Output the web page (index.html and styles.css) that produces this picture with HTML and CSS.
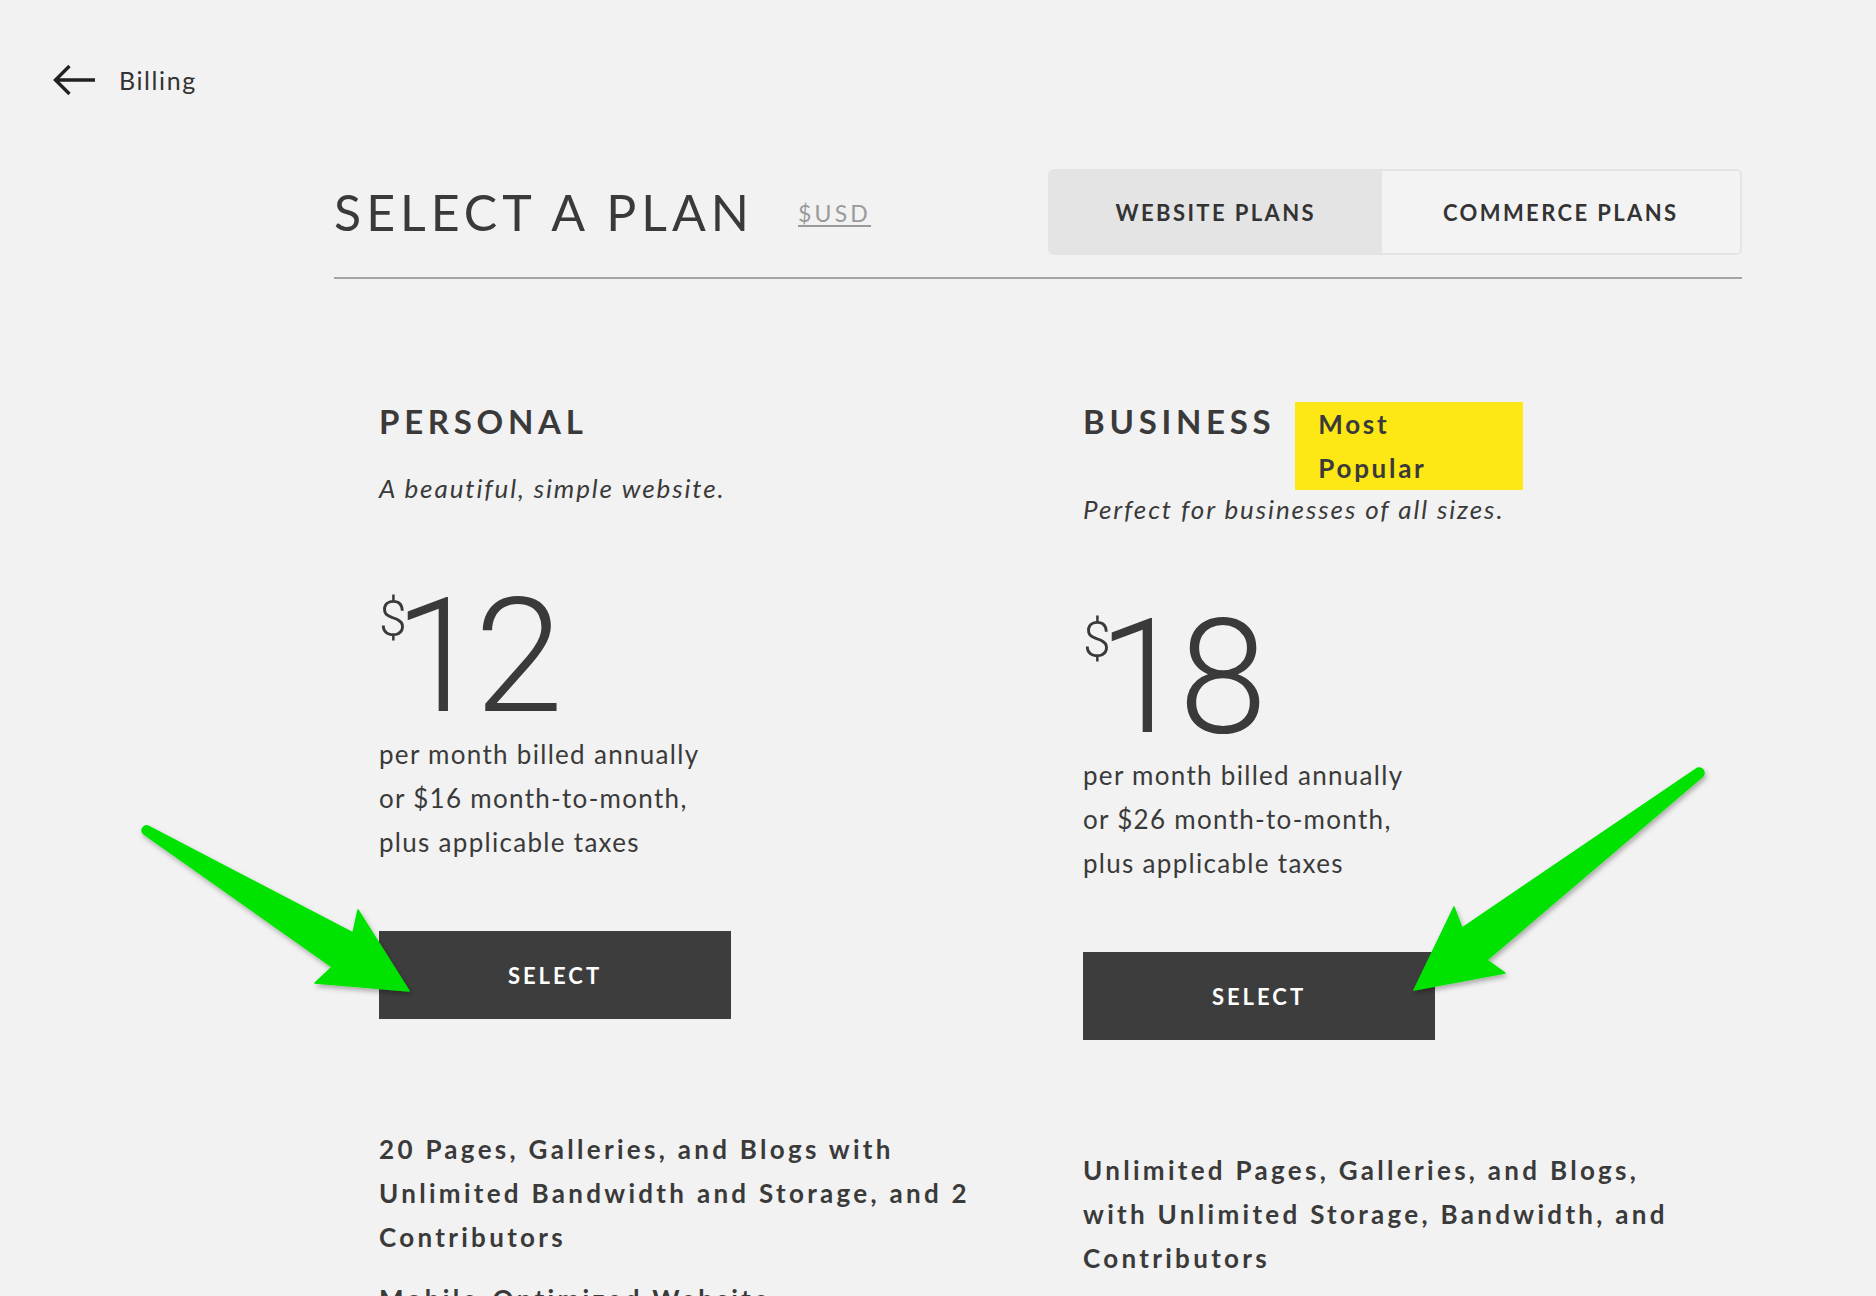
FILE: index.html
```html
<!DOCTYPE html>
<html lang="en">
<head>
<meta charset="utf-8">
<title>Select a Plan</title>
<link rel="stylesheet" href="styles.css">
</head>
<body>
<div class="page">
  <a class="back" href="#">
    <svg class="back-icon" width="44" height="32" viewBox="0 0 44 32" aria-hidden="true">
      <path d="M43 16 H3.5 M17.5 2 L3.5 16 L17.5 30" fill="none" stroke="#222" stroke-width="3.4"/>
    </svg>
    <span class="back-label">Billing</span>
  </a>

  <main class="content">
    <header class="plan-header">
      <div class="title-group">
        <h1 class="title">SELECT A PLAN</h1>
        <a class="currency" href="#">$USD</a>
      </div>
      <div class="tabs">
        <button class="tab tab-active">WEBSITE PLANS</button>
        <button class="tab">COMMERCE PLANS</button>
      </div>
    </header>

    <section class="plans">
      <article class="plan">
        <div class="plan-head">
          <h2 class="plan-name">PERSONAL</h2>
        </div>
        <p class="tagline">A beautiful, simple website.</p>
        <div class="price"><span class="price-cur">$</span><span class="price-amount">12</span></div>
        <p class="billing">per month billed annually<br>or $16 month-to-month,<br>plus applicable taxes</p>
        <button class="select">SELECT</button>
        <ul class="features">
          <li>20 Pages, Galleries, and Blogs with Unlimited Bandwidth and Storage, and 2 Contributors</li>
          <li>Mobile-Optimized Website</li>
        </ul>
      </article>

      <article class="plan">
        <div class="plan-head">
          <h2 class="plan-name">BUSINESS</h2>
          <div class="badge"><span class="badge-text">Most Popular</span></div>
        </div>
        <p class="tagline">Perfect for businesses of all sizes.</p>
        <div class="price"><span class="price-cur">$</span><span class="price-amount">18</span></div>
        <p class="billing">per month billed annually<br>or $26 month-to-month,<br>plus applicable taxes</p>
        <button class="select">SELECT</button>
        <ul class="features">
          <li>Unlimited Pages, Galleries, and Blogs, with Unlimited Storage, Bandwidth, and Contributors</li>
          <li>Mobile-Optimized Website</li>
        </ul>
      </article>
    </section>
  </main>

  <svg class="annotations" width="1876" height="1296" viewBox="0 0 1876 1296" aria-hidden="true">
    <defs>
      <filter id="shadow" x="-10%" y="-10%" width="130%" height="130%">
        <feDropShadow dx="1.5" dy="3" stdDeviation="2.5" flood-color="#000" flood-opacity="0.3"/>
      </filter>
    </defs>
    <path class="arrow" filter="url(#shadow)"
      d="M148.3,826.2 L353,933 L358,910 L409,991 L315,983 L332,967 L143.7,833.8 A4.5,4.5 0 0 1 148.3,826.2 Z"/>
    <path class="arrow" filter="url(#shadow)"
      d="M1696,769 L1462,928 L1454,907 L1414,990 L1505,973 L1487,960 L1702,777 A5,5 0 0 0 1696,769 Z"/>
  </svg>
</div>
</body>
</html>
```

FILE: styles.css
```css
* { box-sizing: border-box; }

html, body {
  margin: 0;
  padding: 0;
  background: #f2f2f2;
}

body {
  font-family: "Lato", "Open Sans", sans-serif;
  color: #3a3a3a;
  width: 1876px;
  height: 1296px;
  overflow: hidden;
}

.page {
  position: relative;
  width: 1876px;
  height: 1296px;
  overflow: hidden;
}

/* back link */
.back {
  display: flex;
  align-items: center;
  gap: 23px;
  height: 32px;
  margin: 64px 0 0 52px;
  width: max-content;
  color: #333;
  text-decoration: none;
}

.back-label {
  font-size: 25px;
  letter-spacing: 1.6px;
  line-height: 30px;
}

/* content */
.content {
  width: 1408px;
  margin: 73px 0 0 334px;
}

.plan-header {
  display: flex;
  justify-content: space-between;
  align-items: center;
  padding-bottom: 22px;
  border-bottom: 2px solid #a4a4a4;
}

.title-group {
  display: flex;
  align-items: center;
  gap: 44px;
}

.title {
  margin: 0;
  font-size: 50px;
  font-weight: 400;
  line-height: 1;
  letter-spacing: 5px;
  color: #3a3a3a;
}

.currency {
  font-size: 23px;
  letter-spacing: 3.2px;
  color: #9a9a9a;
  text-decoration: none;
  border-bottom: 2px solid #9a9a9a;
  line-height: 22px;
  padding-bottom: 1px;
  margin-top: 4px;
}

.tabs {
  display: flex;
  width: 694px;
  height: 86px;
  border: 2px solid #e4e4e4;
  border-radius: 6px;
  overflow: hidden;
}

.tab {
  border: 0;
  margin: 0;
  font-family: inherit;
  font-size: 22px;
  font-weight: 700;
  letter-spacing: 2.4px;
  color: #333;
  background: #f3f3f3;
  flex: 361 1 0;
  cursor: pointer;
}

.tab-active {
  background: #e4e4e4;
  flex: 333 1 0;
}

/* plans */
.plans {
  display: grid;
  grid-template-columns: 704px 704px;
  margin-top: 122px;
}

.plan {
  padding: 0 45px;
}

.plan-head {
  display: flex;
  align-items: flex-start;
}

.plan-name {
  margin: 0;
  font-size: 33px;
  font-weight: 700;
  line-height: 40px;
  letter-spacing: 4.7px;
  color: #3a3a3a;
}

.badge {
  width: 228px;
  height: 88px;
  margin: 1px 0 -28px 20px;
  padding-left: 23px;
  background: #fde816;
}

.badge-text {
  display: block;
  width: min-content;
  font-size: 26px;
  font-weight: 700;
  line-height: 44px;
  letter-spacing: 2.7px;
  color: #3a3a3a;
}

.tagline {
  margin: 25px 0 0;
  font-size: 26px;
  font-style: italic;
  line-height: 44px;
  letter-spacing: 1.9px;
  color: #3a3a3a;
}

.price {
  display: flex;
  align-items: flex-start;
  margin-top: 72px;
  height: 150px;
}

.price-cur {
  font-family: "Roboto", "Lato", sans-serif;
  font-size: 50px;
  font-weight: 300;
  line-height: 50px;
  margin-top: 12px;
  margin-right: -13px;
  color: #3a3a3a;
}

.price-amount {
  font-family: "Roboto", "Lato", sans-serif;
  font-size: 160px;
  font-weight: 300;
  line-height: 150px;
  letter-spacing: -8px;
  color: #3a3a3a;
}

.billing {
  margin: 0;
  font-size: 26px;
  line-height: 44px;
  letter-spacing: 1.3px;
  color: #3a3a3a;
}

.select {
  display: block;
  width: 352px;
  height: 88px;
  margin-top: 67px;
  border: 0;
  background: #3d3d3d;
  color: #fff;
  font-family: inherit;
  font-size: 22px;
  font-weight: 700;
  letter-spacing: 3px;
  cursor: pointer;
}

.features {
  list-style: none;
  margin: 108px 0 0;
  padding: 0;
  max-width: 614px;
}

.features li {
  font-size: 26px;
  font-weight: 700;
  line-height: 44px;
  letter-spacing: 3.3px;
  color: #3a3a3a;
}

.features li + li {
  margin-top: 18px;
}

/* annotation arrows */
.annotations {
  position: absolute;
  left: 0;
  top: 0;
  pointer-events: none;
}

.arrow {
  fill: #04e304;
  stroke: #04e304;
  stroke-width: 1.5;
  stroke-linejoin: round;
}
```
